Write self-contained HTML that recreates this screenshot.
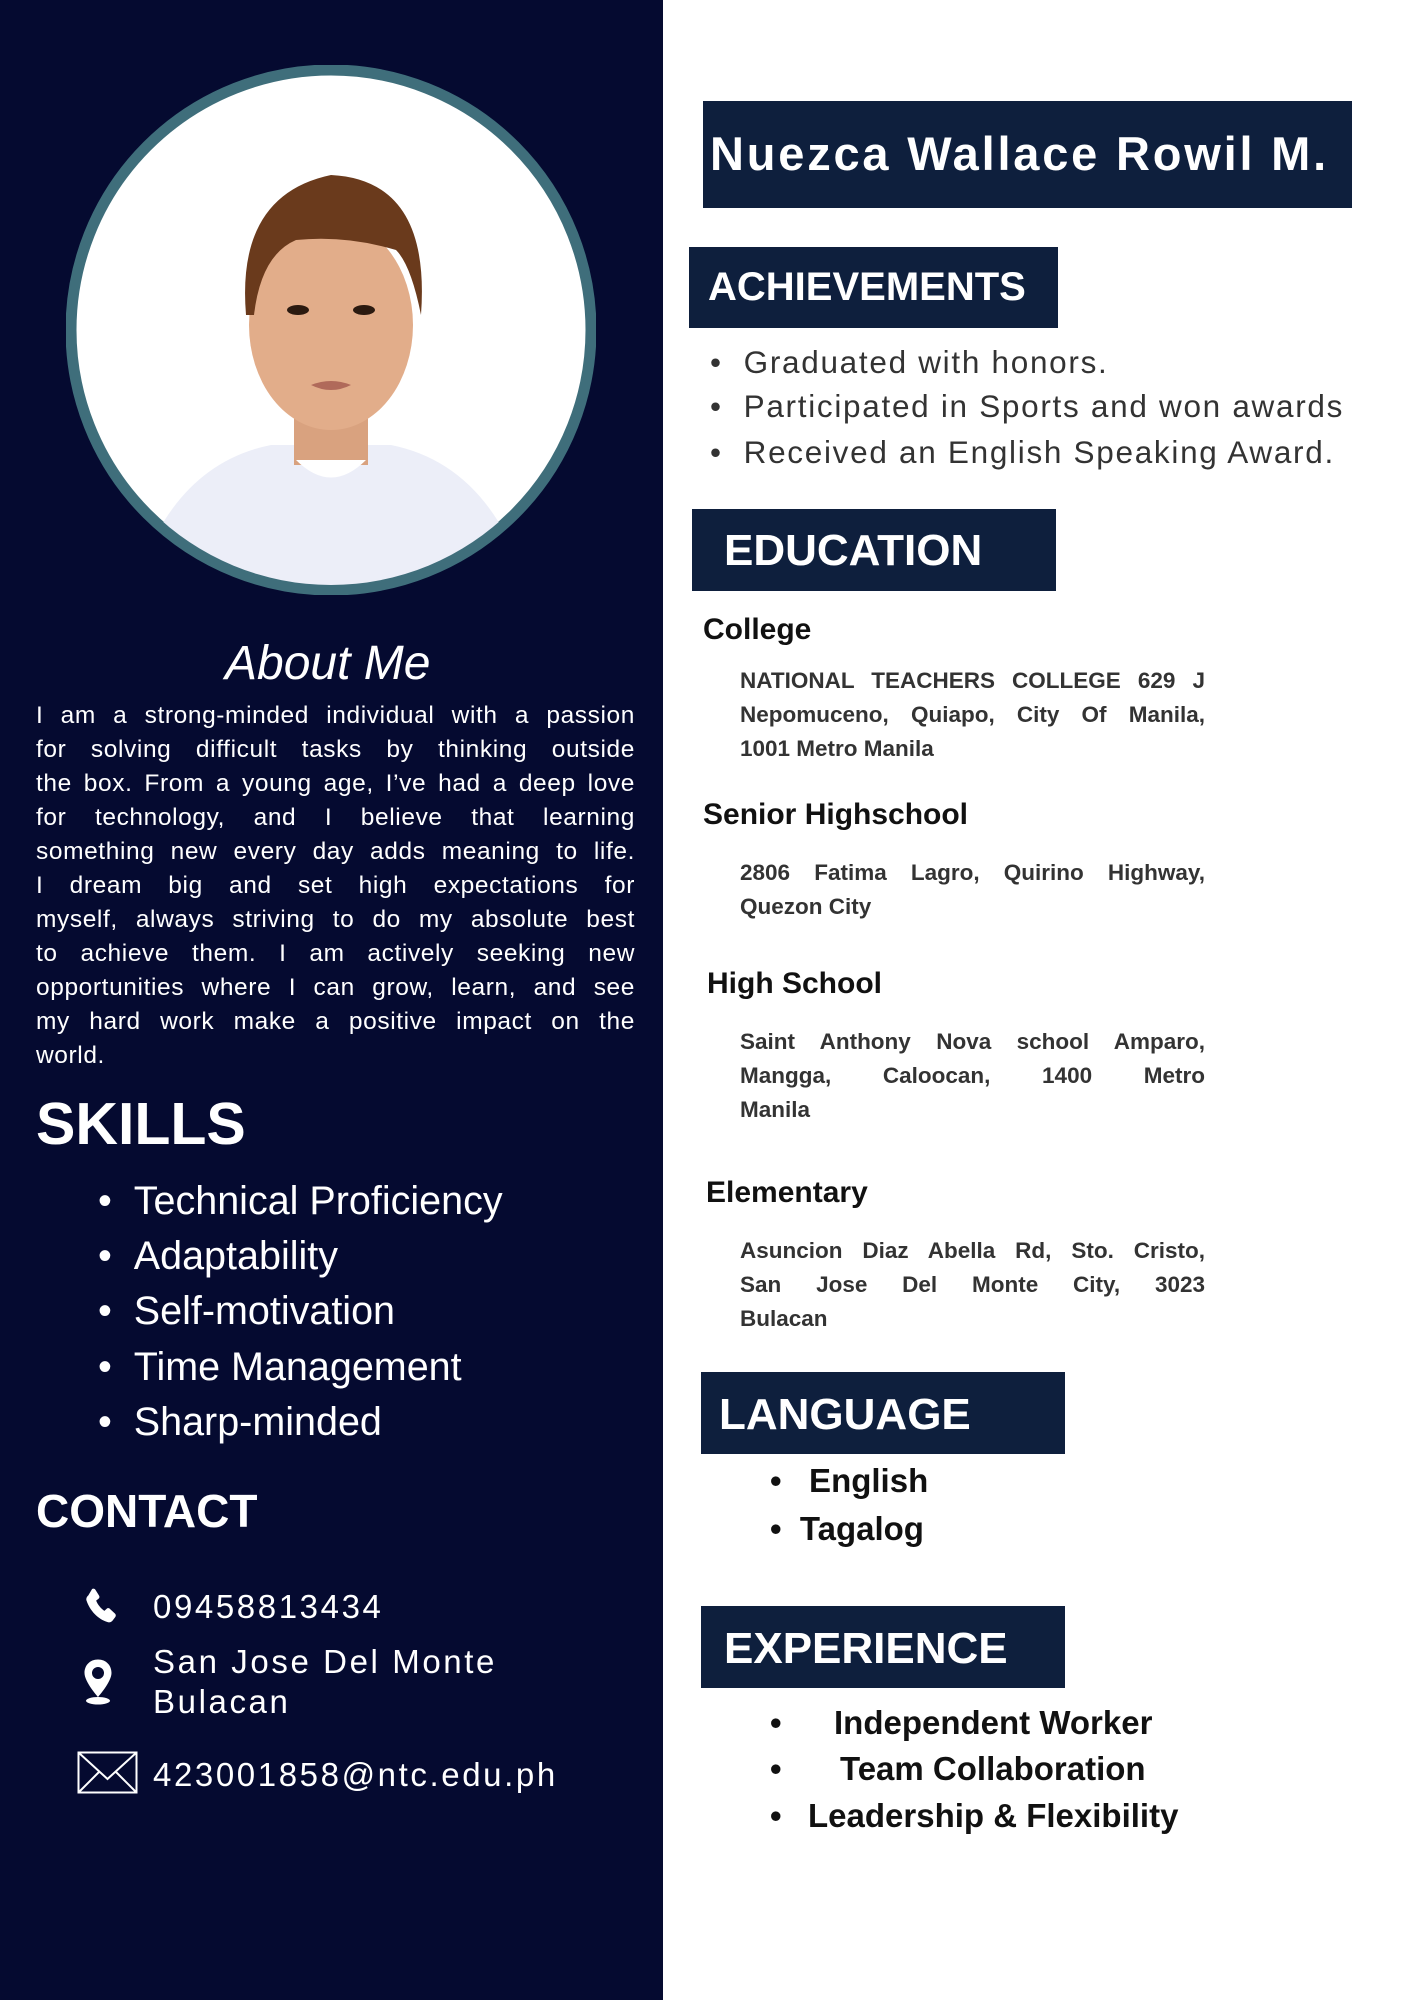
<!DOCTYPE html>
<html><head><meta charset="utf-8"><style>
*{margin:0;padding:0;box-sizing:border-box}
body{width:1414px;height:2000px;position:relative;background:#fff;font-family:"Liberation Sans",sans-serif;overflow:hidden}
.left{position:absolute;left:0;top:0;width:663px;height:2000px;background:#050a30}
.abs{position:absolute;white-space:nowrap}
.w{color:#fff}
.box{position:absolute;background:#0e1f3d;color:#fff;font-weight:bold}
.p{position:absolute;left:36px;width:599px;color:#fff;font-size:24.5px;line-height:34px;letter-spacing:0.6px}
.p div,.et div{text-align:justify;text-align-last:justify;white-space:nowrap}
.p div.l,.et div.l{text-align-last:left}
.sk{color:#fff;font-size:39.5px}
.ach{color:#333;font-size:31.5px;letter-spacing:1.7px}
.eh{color:#111;font-weight:bold;font-size:30px}
.et{position:absolute;left:740px;width:465px;color:#333;font-weight:bold;font-size:22.5px;line-height:34px}
.ct{color:#fff;font-size:33px;font-weight:300;letter-spacing:2.6px}
.b{color:#111;font-weight:bold;font-size:33px}
</style></head><body>
<div class="left"></div>
<svg class="abs" style="left:66px;top:65px" width="530" height="530" viewBox="0 0 530 530">
<defs><clipPath id="c"><circle cx="265" cy="265" r="255"/></clipPath></defs>
<circle cx="265" cy="265" r="260" fill="#fff" stroke="#3f6e7b" stroke-width="11"/>
<g clip-path="url(#c)">
<path d="M90 470 Q130 395 205 380 L325 380 Q400 395 440 470 L440 560 L90 560Z" fill="#eceef8"/>
<rect x="228" y="330" width="74" height="70" fill="#d9a27f"/>
<ellipse cx="265" cy="260" rx="82" ry="105" fill="#e2ad8a"/>
<path d="M180 250 Q170 130 265 110 Q365 115 355 250 Q345 200 330 185 Q280 170 230 175 Q195 190 188 250Z" fill="#6a3a1c"/>
<ellipse cx="232" cy="245" rx="11" ry="5" fill="#2b1a10"/>
<ellipse cx="298" cy="245" rx="11" ry="5" fill="#2b1a10"/>
<path d="M245 320 Q265 312 285 320 Q265 330 245 320Z" fill="#b06a5a"/>
<path d="M230 395 Q265 430 300 395" fill="#fff"/>
</g></svg>
<div class="abs" style="left:225px;top:636px;font-size:48px;font-style:italic;color:#fff">About Me</div>
<div class="p" style="top:699px">
<div>I am a strong-minded individual with a passion</div>
<div>for solving difficult tasks by thinking outside</div>
<div>the box. From a young age, I’ve had a deep love</div>
<div>for technology, and I believe that learning</div>
<div>something new every day adds meaning to life.</div>
<div>I dream big and set high expectations for</div>
<div>myself, always striving to do my absolute best</div>
<div>to achieve them. I am actively seeking new</div>
<div>opportunities where I can grow, learn, and see</div>
<div>my hard work make a positive impact on the</div>
<div class="l">world.</div>
</div>
<div class="abs w" style="left:36px;top:1090px;font-size:59px;font-weight:bold">SKILLS</div>
<div class="abs sk" style="left:98px;top:1179px">•&nbsp;&nbsp;Technical Proficiency</div>
<div class="abs sk" style="left:98px;top:1234px">•&nbsp;&nbsp;Adaptability</div>
<div class="abs sk" style="left:98px;top:1289px">•&nbsp;&nbsp;Self-motivation</div>
<div class="abs sk" style="left:98px;top:1345px">•&nbsp;&nbsp;Time Management</div>
<div class="abs sk" style="left:98px;top:1400px">•&nbsp;&nbsp;Sharp-minded</div>
<div class="abs w" style="left:36px;top:1484px;font-size:46px;font-weight:bold">CONTACT</div>
<svg class="abs" style="left:80px;top:1585px" width="44" height="44" viewBox="0 0 24 24"><path fill="#fff" d="M6.6 2.2c.6-.4 1.4-.2 1.8.4l2 3.2c.4.6.2 1.3-.3 1.7l-1.3 1c.9 2.2 2.5 4.2 4.5 5.6l1.2-1.1c.5-.5 1.3-.5 1.8 0l2.8 2.6c.5.5.6 1.3.1 1.9l-1.5 2c-.7.8-1.8 1.1-2.8.7C9.8 18.6 5.4 14 3.6 8.6c-.4-1 0-2.2.9-2.9z"/></svg>
<div class="abs ct" style="left:153px;top:1588px">09458813434</div>
<svg class="abs" style="left:80px;top:1658px" width="36" height="48" viewBox="0 0 24 32"><path fill="#fff" d="M12 1C6.5 1 3 5 3 10c0 6 9 16 9 16s9-10 9-16c0-5-3.5-9-9-9zm0 5a4 4 0 1 1 0 8 4 4 0 0 1 0-8z"/><ellipse cx="12" cy="28.5" rx="8" ry="2.5" fill="#fff"/></svg>
<div class="abs ct" style="left:153px;top:1642px;line-height:40px">San Jose Del Monte<br>Bulacan</div>
<svg class="abs" style="left:77px;top:1751px" width="61" height="43" viewBox="0 0 61 43"><rect x="1.5" y="1.5" width="58" height="40" fill="none" stroke="#fff" stroke-width="2"/><path d="M1.5 1.5L30.5 28 59.5 1.5M1.5 41.5L22 21M59.5 41.5L39 21" fill="none" stroke="#fff" stroke-width="2"/></svg>
<div class="abs ct" style="left:153px;top:1756px">423001858@ntc.edu.ph</div>

<div class="box" style="left:703px;top:101px;width:649px;height:107px"><span class="abs" style="left:7px;top:25px;font-size:47px;letter-spacing:2.8px">Nuezca Wallace Rowil M.</span></div>
<div class="box" style="left:689px;top:247px;width:369px;height:81px"><span class="abs" style="left:19px;top:18px;font-size:40px">ACHIEVEMENTS</span></div>
<div class="abs ach" style="left:710px;top:344px">•&nbsp;&nbsp;Graduated with honors.</div>
<div class="abs ach" style="left:710px;top:388px">•&nbsp;&nbsp;Participated in Sports and won awards</div>
<div class="abs ach" style="left:710px;top:434px">•&nbsp;&nbsp;Received an English Speaking Award.</div>
<div class="box" style="left:692px;top:509px;width:364px;height:82px"><span class="abs" style="left:32px;top:17px;font-size:44px">EDUCATION</span></div>
<div class="abs eh" style="left:703px;top:613px">College</div>
<div class="et" style="top:664px"><div>NATIONAL TEACHERS COLLEGE 629 J</div><div>Nepomuceno, Quiapo, City Of Manila,</div><div class="l">1001 Metro Manila</div></div>
<div class="abs eh" style="left:703px;top:798px">Senior Highschool</div>
<div class="et" style="top:856px"><div>2806 Fatima Lagro, Quirino Highway,</div><div class="l">Quezon City</div></div>
<div class="abs eh" style="left:707px;top:967px">High School</div>
<div class="et" style="top:1025px"><div>Saint Anthony Nova school Amparo,</div><div>Mangga, Caloocan, 1400 Metro</div><div class="l">Manila</div></div>
<div class="abs eh" style="left:706px;top:1176px">Elementary</div>
<div class="et" style="top:1234px"><div>Asuncion Diaz Abella Rd, Sto. Cristo,</div><div>San Jose Del Monte City, 3023</div><div class="l">Bulacan</div></div>
<div class="box" style="left:701px;top:1372px;width:364px;height:82px"><span class="abs" style="left:18px;top:18px;font-size:44px">LANGUAGE</span></div>
<div class="abs b" style="left:770px;top:1462px">•&nbsp;&nbsp;&nbsp;English</div>
<div class="abs b" style="left:770px;top:1510px">•&nbsp;&nbsp;Tagalog</div>
<div class="box" style="left:701px;top:1606px;width:364px;height:82px"><span class="abs" style="left:23px;top:18px;font-size:44px">EXPERIENCE</span></div>
<div class="abs b" style="left:770px;top:1704px">•</div>
<div class="abs b" style="left:834px;top:1704px">Independent Worker</div>
<div class="abs b" style="left:770px;top:1750px">•</div>
<div class="abs b" style="left:840px;top:1750px">Team Collaboration</div>
<div class="abs b" style="left:770px;top:1797px">•</div>
<div class="abs b" style="left:808px;top:1797px">Leadership &amp; Flexibility</div>
</body></html>
